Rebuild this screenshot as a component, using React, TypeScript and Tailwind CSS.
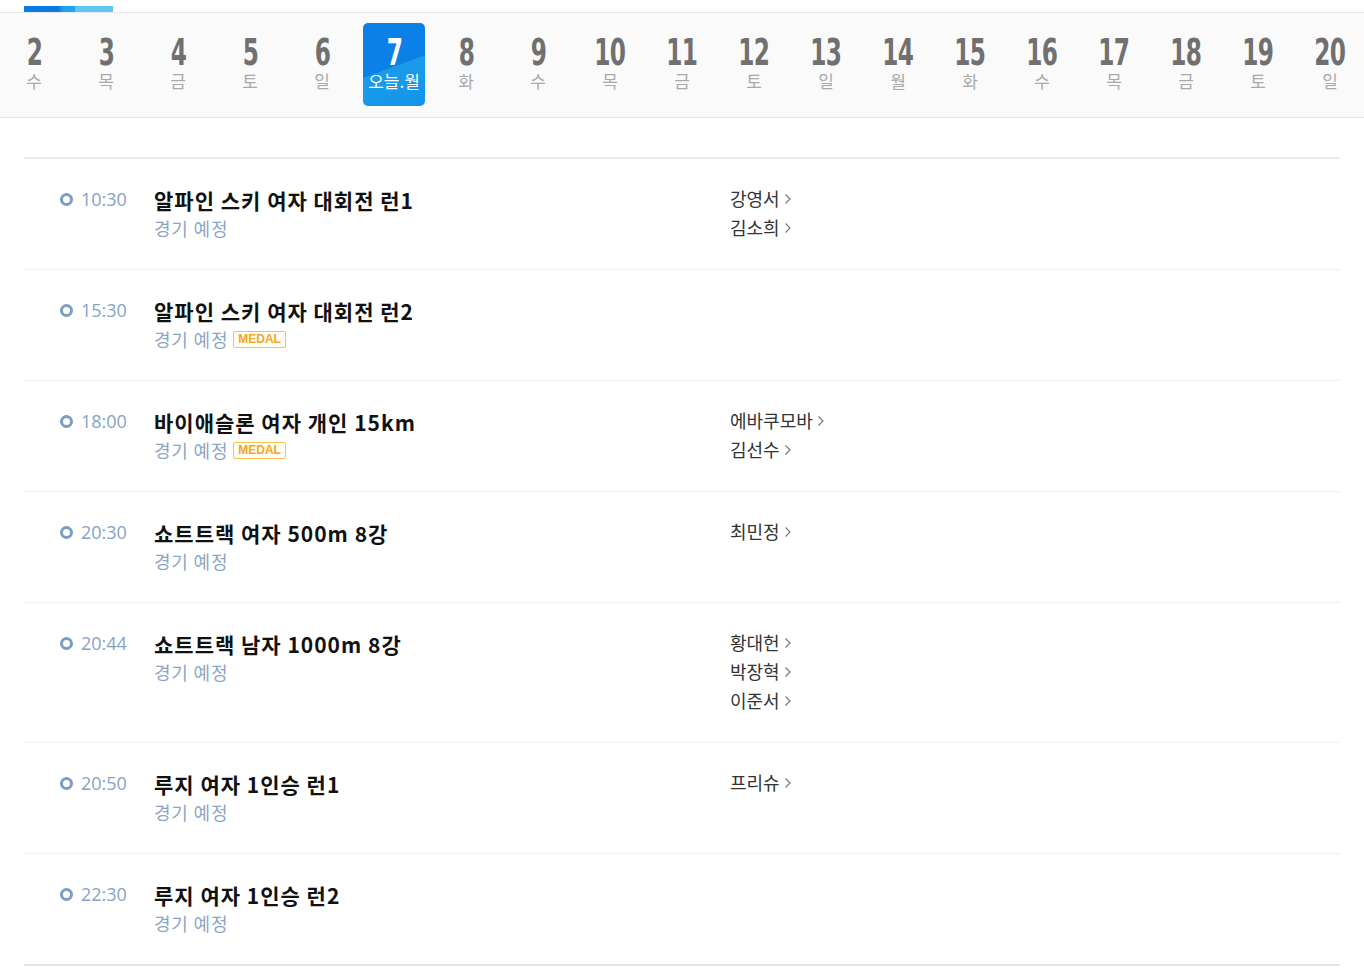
import React from "react";

const days: { n: string; d: string; active?: boolean }[] = [
  { n: "2", d: "수" },
  { n: "3", d: "목" },
  { n: "4", d: "금" },
  { n: "5", d: "토" },
  { n: "6", d: "일" },
  { n: "7", d: "오늘.월", active: true },
  { n: "8", d: "화" },
  { n: "9", d: "수" },
  { n: "10", d: "목" },
  { n: "11", d: "금" },
  { n: "12", d: "토" },
  { n: "13", d: "일" },
  { n: "14", d: "월" },
  { n: "15", d: "화" },
  { n: "16", d: "수" },
  { n: "17", d: "목" },
  { n: "18", d: "금" },
  { n: "19", d: "토" },
  { n: "20", d: "일" },
];

const events: { time: string; title: string; medal?: boolean; athletes: string[] }[] = [
  { time: "10:30", title: "알파인 스키 여자 대회전 런1", athletes: ["강영서", "김소희"] },
  { time: "15:30", title: "알파인 스키 여자 대회전 런2", medal: true, athletes: [] },
  { time: "18:00", title: "바이애슬론 여자 개인 15km", medal: true, athletes: ["에바쿠모바", "김선수"] },
  { time: "20:30", title: "쇼트트랙 여자 500m 8강", athletes: ["최민정"] },
  { time: "20:44", title: "쇼트트랙 남자 1000m 8강", athletes: ["황대헌", "박장혁", "이준서"] },
  { time: "20:50", title: "루지 여자 1인승 런1", athletes: ["프리슈"] },
  { time: "22:30", title: "루지 여자 1인승 런2", athletes: [] },
];

const KR = { fontFamily: '"Noto Sans CJK KR", "Noto Sans", sans-serif' };
const NUM = { fontFamily: '"DejaVu Sans Condensed", "Liberation Sans", sans-serif' };
const TIME = { fontFamily: '"Open Sans", "Noto Sans", sans-serif' };

function Chevron() {
  return (
    <svg width="8" height="12" viewBox="0 0 8 12" className="ml-[4px] inline-block" fill="none">
      <path d="M1.5 1.5 L6 6 L1.5 10.5" stroke="#777" strokeWidth="1.2" />
    </svg>
  );
}

export default function App() {
  return (
    <div className="w-[1364px] min-h-[972px] bg-white overflow-hidden" style={KR}>
      <div className="h-[12px] pt-[6px] pl-[24px]">
        <div className="h-[6px] w-[89px] bg-[linear-gradient(90deg,#0a7be4_0%,#0a7be4_38%,#1fa5ef_45%,#1fa5ef_57%,#5ec7f5_57%,#5ec7f5_100%)]" />
      </div>
      <div className="border-y border-[#e6e6e6] bg-[#fafafa] h-[106px] pt-[10px]">
        <div className="flex ml-[-2px]">
          {days.map((x) => (
            <div key={x.n} className="w-[72px] shrink-0 flex justify-center">
              <div
                className={
                  "w-[62px] h-[83px] rounded-[5px] flex flex-col items-center pt-[13px] " +
                  (x.active
                    ? "bg-[linear-gradient(160deg,#0b80e6_0%,#0b80e6_52%,#1a9bea_52%,#1494e9_100%)]"
                    : "")
                }
              >
                <span
                  className={
                    "inline-block scale-x-[0.68] text-[38px] leading-[32px] h-[32px] font-bold tracking-[-1px] " +
                    (x.active ? "text-white" : "text-[#707070]")
                  }
                  style={NUM}
                >
                  {x.n}
                </span>
                <span
                  className={
                    "text-[17px] leading-[20px] mt-[3px] whitespace-nowrap " +
                    (x.active ? "text-white" : "text-[#a9a9a9]")
                  }
                >
                  {x.d}
                </span>
              </div>
            </div>
          ))}
        </div>
      </div>

      <div className="mx-[24px] mt-[39px] border-t-2 border-[#ebebeb]">
        {events.map((e, i) => (
          <div
            key={i}
            className={
              "flex pl-[36px] pt-[25px] pb-[27px] border-b " +
              (i === events.length - 1 ? "border-b-2 border-[#e6e6e6]" : "border-[#f0f0f0]")
            }
          >
            <div className="w-[94px] shrink-0 flex items-start mt-[1px] h-[28px]">
              <div className="flex items-center h-[28px]">
                <span className="w-[13px] h-[13px] rounded-full border-[3px] border-[#7b9dc2]" />
                <span className="ml-[8px] text-[18px] font-normal text-[#86a3c3]" style={TIME}>
                  {e.time}
                </span>
              </div>
            </div>
            <div className="w-[576px] shrink-0 mt-[2px]">
              <div className="text-[21px] leading-[28px] font-bold tracking-[1px] text-[#111]">{e.title}</div>
              <div className="flex items-center h-[28px]">
                <span className="text-[18px] leading-[27px] tracking-[0.8px] text-[#8ca6c4]">경기 예정</span>
                {e.medal && (
                  <span
                    className="ml-[5px] h-[17px] px-[4px] border border-[#f6c14e] rounded-[2px] text-[12px] leading-[15px] font-bold text-[#f5a623] bg-[#fffdf5]"
                    style={{ fontFamily: '"Liberation Sans", sans-serif' }}
                  >
                    MEDAL
                  </span>
                )}
              </div>
            </div>
            <div className="flex flex-col">
              {e.athletes.map((a) => (
                <div key={a} className="flex items-center text-[18px] leading-[29px] text-[#333]">
                  {a}
                  <Chevron />
                </div>
              ))}
            </div>
          </div>
        ))}
      </div>
    </div>
  );
}
